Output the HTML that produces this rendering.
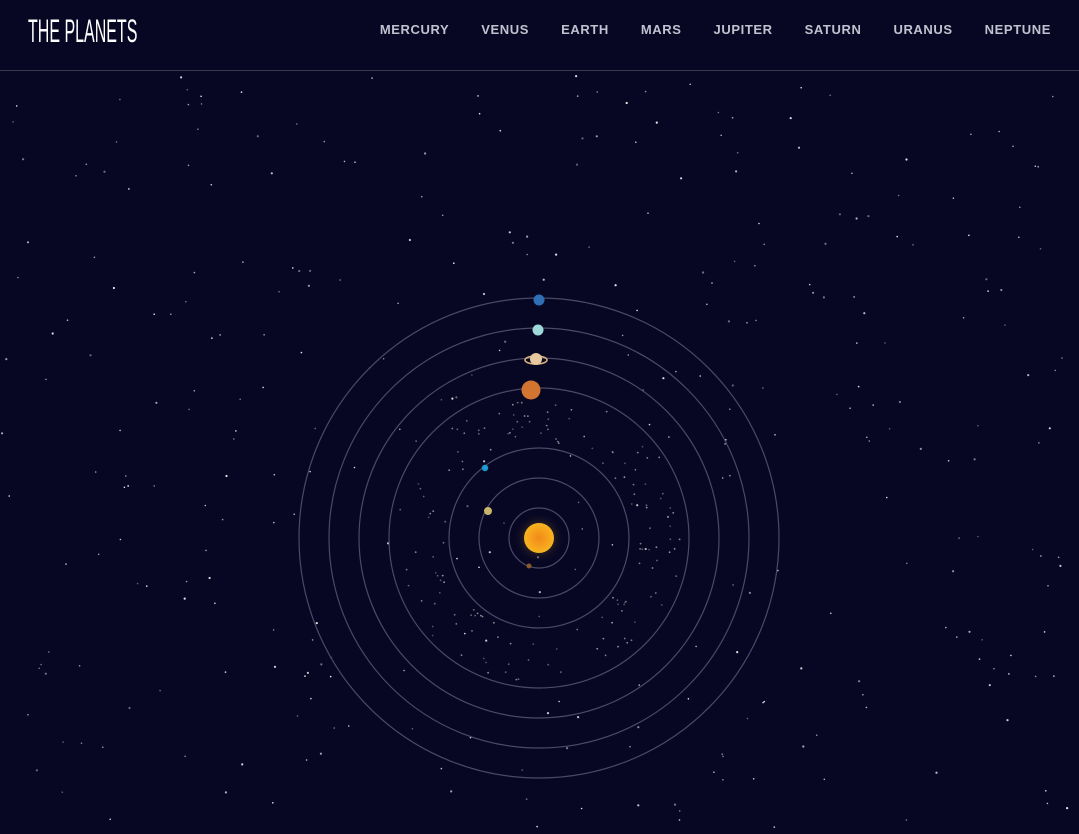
<!DOCTYPE html>
<html><head><meta charset="utf-8"><style>
html,body{margin:0;padding:0;background:#070724;width:1079px;height:834px;overflow:hidden;font-family:"Liberation Sans",sans-serif}
header{position:absolute;left:0;top:0;width:1079px;height:70px;border-bottom:1px solid #38384f}
.logo{position:absolute;left:28px;top:14px;color:#fff;font-family:"Liberation Sans Narrow","Liberation Sans",sans-serif;font-size:32px;letter-spacing:0px;transform:scaleX(0.5);transform-origin:left;line-height:34px;white-space:nowrap}
nav{position:absolute;right:28px;top:22px;display:flex;gap:32px}
nav span{color:#c1c1cf;font-size:13px;font-weight:bold;letter-spacing:0.6px}
svg{position:absolute;left:0;top:0}
</style></head><body>
<svg id="s" width="1079" height="834">
<defs>
<radialGradient id="sun" cx="50%" cy="50%" r="50%"><stop offset="0" stop-color="#f08a1a"/><stop offset="0.6" stop-color="#f7a21c"/><stop offset="1" stop-color="#f5b520"/></radialGradient>
<radialGradient id="glow"><stop offset="0.5" stop-color="#3a2a20" stop-opacity="0.8"/><stop offset="1" stop-color="#070724" stop-opacity="0"/></radialGradient>
</defs>
<g id="stars"></g>
<g fill="none" stroke="#4a4a66" stroke-width="1.2">
<circle cx="539" cy="538" r="30"/><circle cx="539" cy="538" r="60"/><circle cx="539" cy="538" r="90"/>
<circle cx="539" cy="538" r="150"/><circle cx="539" cy="538" r="180"/><circle cx="539" cy="538" r="210"/><circle cx="539" cy="538" r="240"/>
</g>
<circle cx="539" cy="538" r="26" fill="url(#glow)"/>
<circle cx="539" cy="538" r="15" fill="url(#sun)"/>
<circle cx="529" cy="566" r="2.5" fill="#8a5a2a"/>
<circle cx="488" cy="511" r="4" fill="#c9b66a"/>
<circle cx="485" cy="468" r="3.2" fill="#1e9ad0"/>
<circle cx="531" cy="390" r="9.5" fill="#d27530"/>
<ellipse cx="536" cy="360" rx="11" ry="4" fill="none" stroke="#d8b27a" stroke-width="1.6"/>
<circle cx="536" cy="359" r="6" fill="#e7c9a0"/>
<circle cx="538" cy="330" r="5.5" fill="#9ed8d8"/>
<circle cx="539" cy="300" r="5.5" fill="#2f6fb5"/>
</svg>
<header>
<div class="logo">THE PLANETS</div>
<nav><span>MERCURY</span><span>VENUS</span><span>EARTH</span><span>MARS</span><span>JUPITER</span><span>SATURN</span><span>URANUS</span><span>NEPTUNE</span></nav>
</header>
<script>
var g=document.getElementById('stars'),seed=12345;
function r(){seed=(seed*1103515245+12345)%2147483648;return seed/2147483648;}
var h='';
for(var i=0;i<340;i++){var x=r()*1079,y=72+r()*762,o=0.35+r()*0.6,s=r()<0.3?1.1:0.8;
h+='<circle cx="'+x.toFixed(1)+'" cy="'+y.toFixed(1)+'" r="'+s+'" fill="#fff" opacity="'+o.toFixed(2)+'"/>';}
for(var i=0;i<140;i++){var a=r()*6.283,d=95+r()*50,x=539+Math.cos(a)*d,y=538+Math.sin(a)*d;
h+='<circle cx="'+x.toFixed(1)+'" cy="'+y.toFixed(1)+'" r="0.9" fill="#aaa" opacity="'+(0.4+r()*0.5).toFixed(2)+'"/>';}
g.innerHTML=h;
</script>
</body></html>
